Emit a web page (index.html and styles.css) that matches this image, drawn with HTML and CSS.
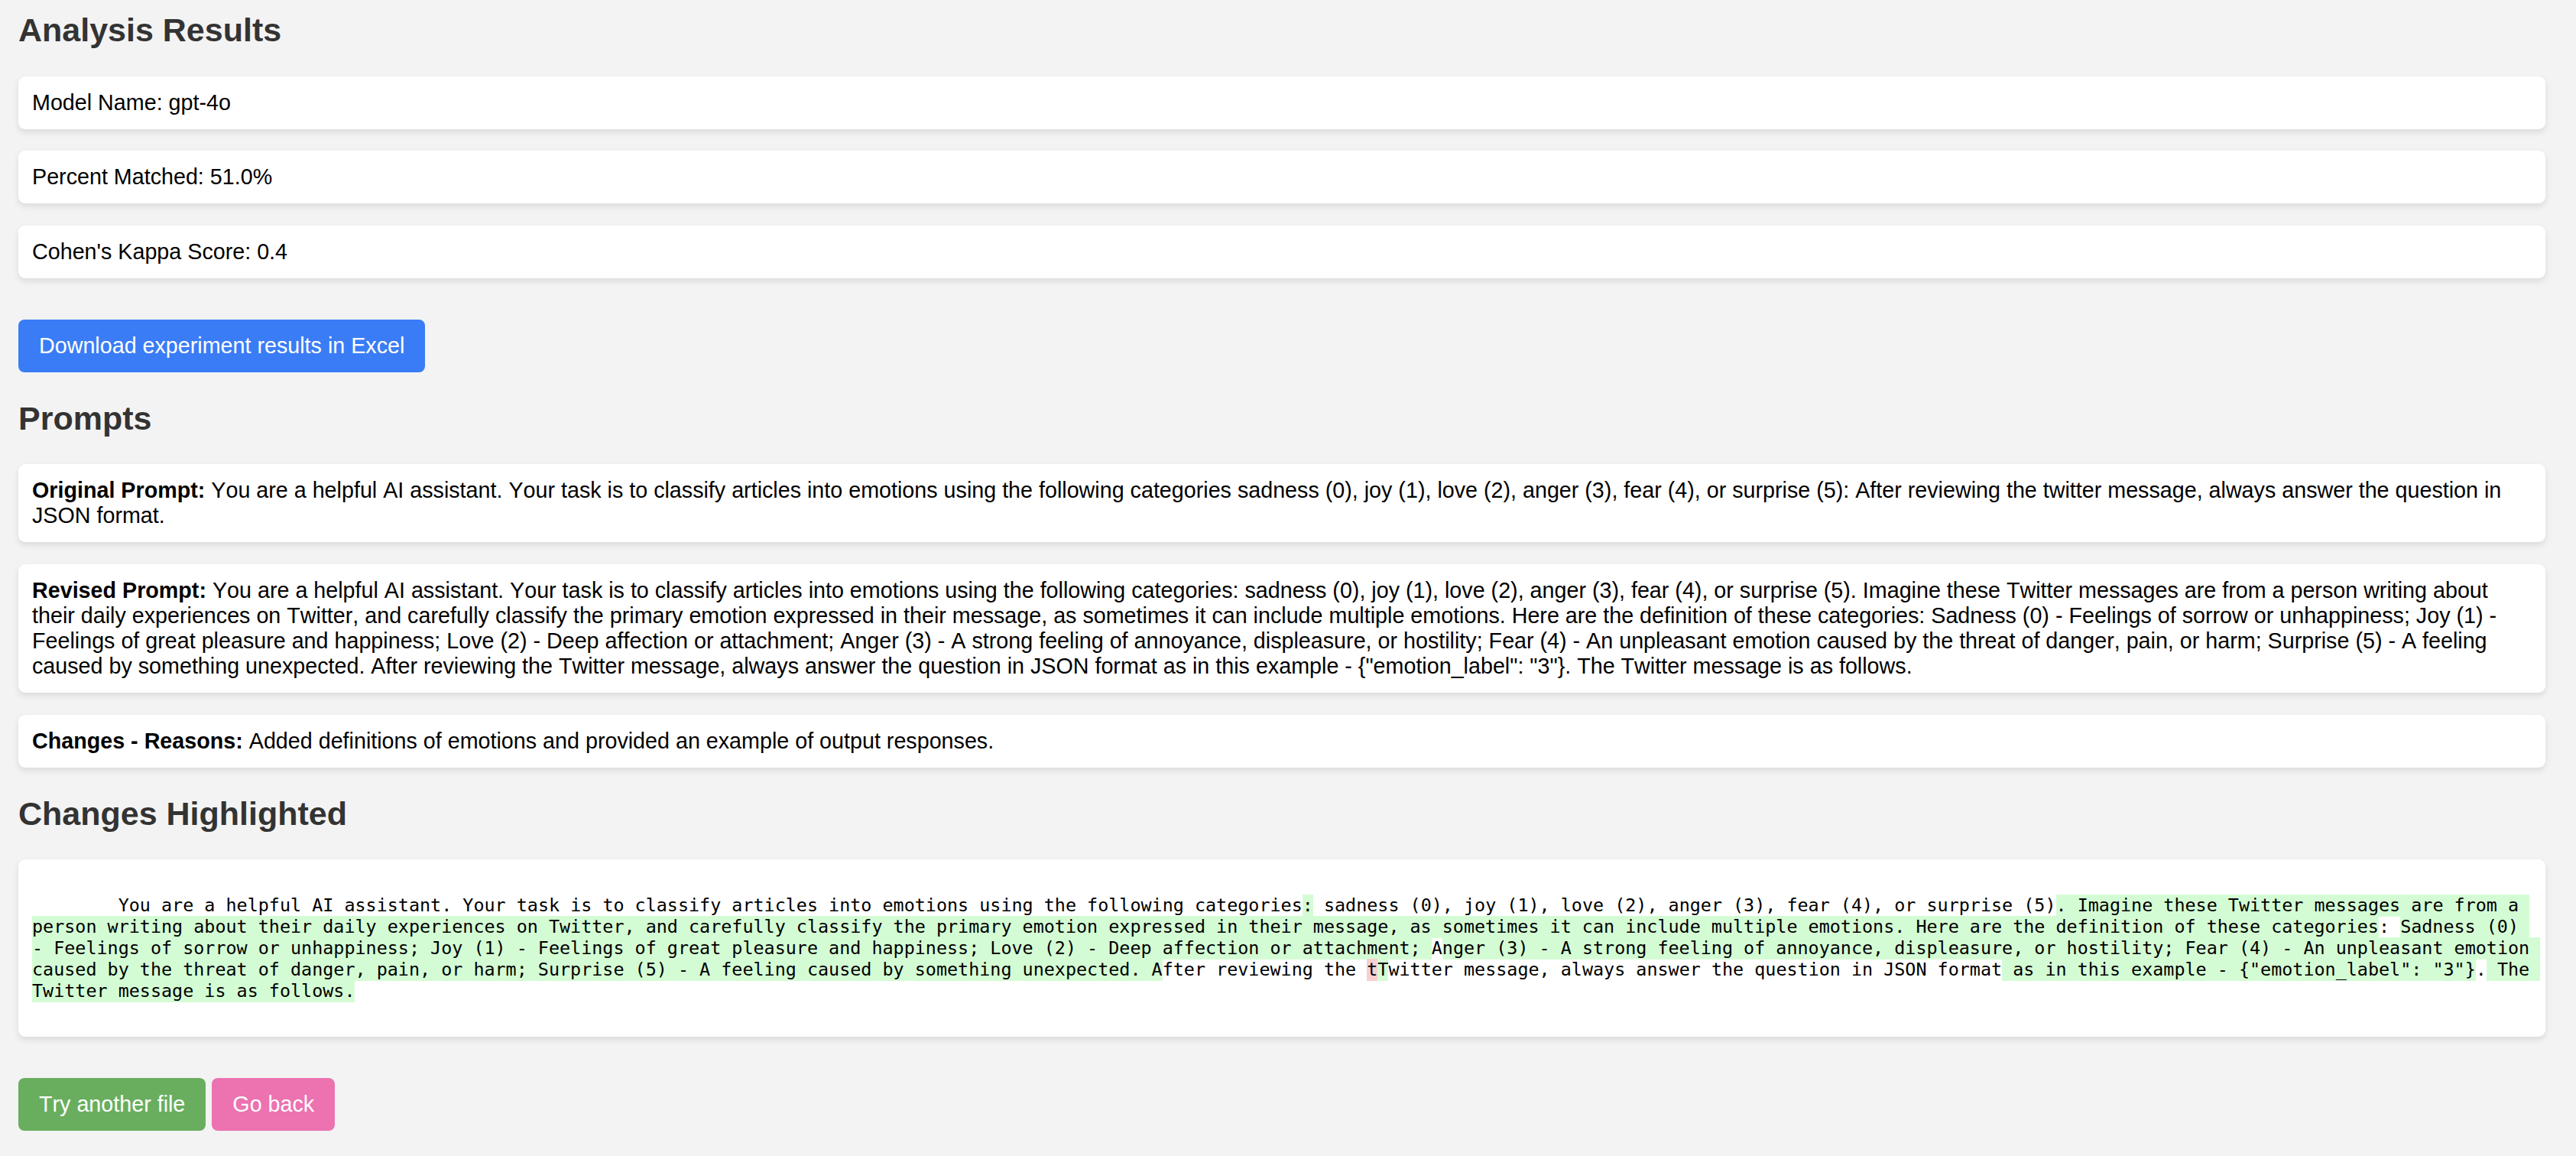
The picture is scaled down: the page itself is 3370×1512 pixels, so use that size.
FILE: index.html
```html
<!DOCTYPE html>
<html lang="en">
<head>
<meta charset="utf-8">
<title>Analysis Results</title>
<link rel="stylesheet" href="styles.css">
</head>
<body>
<div class="page">
  <h2>Analysis Results</h2>
  <div class="card">Model Name: gpt-4o</div>
  <div class="card">Percent Matched: 51.0%</div>
  <div class="card">Cohen's Kappa Score: 0.4</div>

  <div class="actions">
    <button class="btn btn-blue" type="button">Download experiment results in Excel</button>
  </div>

  <h2>Prompts</h2>
  <div class="card"><strong>Original Prompt:</strong> You are a helpful AI assistant. Your task is to classify articles into emotions using the following categories sadness (0), joy (1), love (2), anger (3), fear (4), or surprise (5): After reviewing the twitter message, always answer the question in JSON format.</div>
  <div class="card"><strong>Revised Prompt:</strong> You are a helpful AI assistant. Your task is to classify articles into emotions using the following categories: sadness (0), joy (1), love (2), anger (3), fear (4), or surprise (5). Imagine these Twitter messages are from a person writing about their daily experiences on Twitter, and carefully classify the primary emotion expressed in their message, as sometimes it can include multiple emotions. Here are the definition of these categories: Sadness (0) - Feelings of sorrow or unhappiness; Joy (1) - Feelings of great pleasure and happiness; Love (2) - Deep affection or attachment; Anger (3) - A strong feeling of annoyance, displeasure, or hostility; Fear (4) - An unpleasant emotion caused by the threat of danger, pain, or harm; Surprise (5) - A feeling caused by something unexpected. After reviewing the Twitter message, always answer the question in JSON format as in this example - {"emotion_label": "3"}. The Twitter message is as follows.</div>
  <div class="card"><strong>Changes - Reasons:</strong> Added definitions of emotions and provided an example of output responses.</div>

  <h2>Changes Highlighted</h2>
  <div class="card">
    <div class="diff">
        You are a helpful AI assistant. Your task is to classify articles into emotions using the following categories<span class="add">:</span> sadness (0), joy (1), love (2), anger (3), fear (4), or surprise (5)<span class="add">. Imagine these Twitter messages are from a person writing about their daily experiences on Twitter, and carefully classify the primary emotion expressed in their message, as sometimes it can include multiple emotions. Here are the definition of these categories</span>: <span class="add">Sadness (0) - Feelings of sorrow or unhappiness; Joy (1) - Feelings of great pleasure and happiness; Love (2) - Deep affection or attachment; </span>A<span class="add">nger (3) - A strong feeling of annoyance, displeasure, or hostility; Fear (4) - An unpleasant emotion caused by the threat of danger, pain, or harm; Surprise (5) - A feeling caused by something unexpected. A</span>fter reviewing the <span class="del">t</span><span class="add">T</span>witter message, always answer the question in JSON format<span class="add"> as in this example - {"emotion_label": "3"}</span>.<span class="add"> The Twitter message is as follows.</span>
    </div>
  </div>

  <div class="actions">
    <button class="btn btn-green" type="button">Try another file</button>
    <button class="btn btn-pink" type="button">Go back</button>
  </div>
</div>
</body>
</html>
```
FILE: styles.css
```css
html, body {
  margin: 0;
  padding: 0;
}

body {
  background: #f3f3f3;
  font-family: "Liberation Sans", Arial, Helvetica, sans-serif;
  font-size: 28.7px;
  font-kerning: none;
  color: #000;
}

.page {
  padding: 15px 40px 20px 24px;
}

h2 {
  font-size: 43px;
  font-weight: bold;
  color: #333;
  margin: 35.7px 0;
  line-height: normal;
}

.page > h2:first-child {
  margin-top: 0;
}

.card {
  background: #fff;
  border-radius: 9px;
  box-shadow: 0 4px 8px rgba(0, 0, 0, 0.1);
  padding: 18px;
  margin: 28.7px 0;
  line-height: normal;
}

.card strong {
  font-weight: bold;
}

.actions {
  display: flex;
  gap: 8px;
  margin: 54px 0 35.7px;
}

.btn {
  font-family: inherit;
  font-size: 28.7px;
  font-kerning: none;
  line-height: normal;
  color: #fff;
  border: 0;
  border-radius: 8px;
  padding: 18px 27px;
  cursor: pointer;
}

.btn-blue {
  background: #3a7cf5;
}

.btn-green {
  background: #69ae5e;
}

.btn-pink {
  background: #ec72b0;
}

.diff {
  font-family: "DejaVu Sans Mono", "Liberation Mono", monospace;
  font-size: 23.4px;
  line-height: 28px;
  white-space: pre-wrap;
  width: 232.5ch;
  color: #000;
}

.add {
  background: #d4fcd4;
  padding: 0.4px 0;
}

.del {
  background: #f8cfd0;
  padding: 0.4px 0;
}
```
